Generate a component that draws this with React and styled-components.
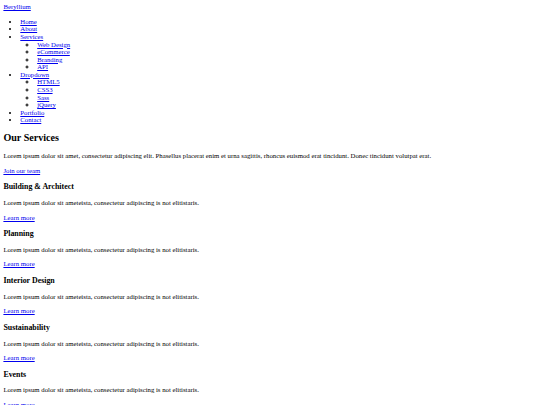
import React from 'react';
import styled, { createGlobalStyle } from 'styled-components';

const GlobalStyle = createGlobalStyle`
    html, body {
        margin: 0;
        padding: 0;
        background: #ffffff;
    }
    body {
        padding: 3.4px;
        font-family: "Liberation Serif", "Times New Roman", serif;
        font-size: 6.75px;
        line-height: 7.6px;
        color: #000000;
    }
`;

const Link = styled.a`
    color: #0000ee;
    text-decoration: underline;
`;

const Header = styled.header`
    display: block;
`;

const Menu = styled.ul`
    margin: ${props => (props.nested ? '0' : '6.75px 0')};
    padding-left: 16.9px;
    list-style-type: ${props => (props.nested ? 'circle' : 'disc')};
`;

const MenuItem = styled.li`
    line-height: 7.6px;
`;

const Section = styled.section`
    display: block;
`;

const Title = styled.h2`
    font-size: 10.1px;
    line-height: 11.6px;
    font-weight: bold;
    margin: 8.4px 0;
`;

const CardTitle = styled.h3`
    font-size: 7.9px;
    line-height: 9.1px;
    font-weight: bold;
    margin: 7.9px 0;
`;

const Text = styled.p`
    margin: 6.75px 0;
`;

const services = [
    'Building & Architect',
    'Planning',
    'Interior Design',
    'Sustainability',
    'Events',
];

const blurb = 'Lorem ipsum dolor sit ameteista, consectetur adipiscing is not elitistaris.';

export default function App() {
    return (
        <>
            <GlobalStyle />
            <Header>
                <Link href="#">Beryllium</Link>
                <nav>
                    <Menu>
                        <MenuItem><Link href="#">Home</Link></MenuItem>
                        <MenuItem><Link href="#">About</Link></MenuItem>
                        <MenuItem>
                            <Link href="#">Services</Link>
                            <Menu nested>
                                <MenuItem><Link href="#">Web Design</Link></MenuItem>
                                <MenuItem><Link href="#">eCommerce</Link></MenuItem>
                                <MenuItem><Link href="#">Branding</Link></MenuItem>
                                <MenuItem><Link href="#">API</Link></MenuItem>
                            </Menu>
                        </MenuItem>
                        <MenuItem>
                            <Link href="#">Dropdown</Link>
                            <Menu nested>
                                <MenuItem><Link href="#">HTML5</Link></MenuItem>
                                <MenuItem><Link href="#">CSS3</Link></MenuItem>
                                <MenuItem><Link href="#">Sass</Link></MenuItem>
                                <MenuItem><Link href="#">jQuery</Link></MenuItem>
                            </Menu>
                        </MenuItem>
                        <MenuItem><Link href="#">Portfolio</Link></MenuItem>
                        <MenuItem><Link href="#">Contact</Link></MenuItem>
                    </Menu>
                </nav>
            </Header>
            <Section>
                <Title>Our Services</Title>
                <Text>
                    Lorem ipsum dolor sit amet, consectetur adipiscing elit. Phasellus placerat enim et urna sagittis, rhoncus euismod erat tincidunt. Donec tincidunt volutpat erat.
                </Text>
                <Text><Link href="#">Join our team</Link></Text>
                {services.map(name => (
                    <div key={name}>
                        <CardTitle>{name}</CardTitle>
                        <Text>{blurb}</Text>
                        <Text><Link href="#">Learn more</Link></Text>
                    </div>
                ))}
            </Section>
        </>
    );
}
